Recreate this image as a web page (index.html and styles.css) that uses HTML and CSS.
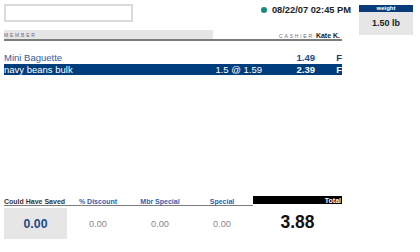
FILE: index.html
```html
<html lang="en">
<head>
    <meta charset="UTF-8">
    <title>Register</title>
    <link rel="stylesheet" href="styles.css">
</head>
<body>
    <div class="screen">
        <div class="main">
            <div class="top">
                <input type="text" class="search">
                <div class="clock"><span class="dot"></span>08/22/07 02:45 PM</div>
            </div>

            <div class="ids">
                <div class="member"><span class="tag">MEMBER</span></div>
                <div class="cashier"><span class="tag">CASHIER</span> <b>Kate K.</b></div>
            </div>

            <!-- Список товаров -->
            <div class="items">
                <div class="item">
                    <span class="name">Mini Baguette</span>
                    <span class="qty"></span>
                    <span class="price">1.49</span>
                    <span class="flag">F</span>
                </div>
                <div class="item selected">
                    <span class="name">navy beans bulk</span>
                    <span class="qty">1.5 @ 1.59</span>
                    <span class="price">2.39</span>
                    <span class="flag">F</span>
                </div>
            </div>

            <!-- Итоги -->
            <div class="totals">
                <div class="head saved">Could Have Saved</div>
                <div class="head">% Discount</div>
                <div class="head">Mbr Special</div>
                <div class="head">Special</div>
                <div class="head total-head">Total</div>

                <div class="val saved-val">0.00</div>
                <div class="val">0.00</div>
                <div class="val">0.00</div>
                <div class="val">0.00</div>
                <div class="val total-val">3.88</div>
            </div>
        </div>

        <div class="weight">
            <div class="weight-title">weight</div>
            <div class="weight-value">1.50 lb</div>
        </div>
    </div>
</body>
</html>
```

FILE: styles.css
```css
body {
    margin: 0;
    padding: 4px 0 0 4px;
    font-family: 'Liberation Sans', Arial, sans-serif;
    background: #fff;
    color: #222;
}
.screen {
    display: flex;
    align-items: flex-start;
}
.main {
    width: 338px;
}

/* Верхняя строка */
.top {
    display: flex;
    justify-content: space-between;
    align-items: center;
    height: 18px;
}
.search {
    width: 129px;
    height: 18px;
    box-sizing: border-box;
    border: 2px solid #dadada;
    margin: 0;
    padding: 0;
    outline: none;
}
.clock {
    display: flex;
    align-items: center;
    margin-right: -9px;
    margin-top: -6px;
    font-size: 9.3px;
    font-weight: bold;
    color: #222;
}
.dot {
    width: 6px;
    height: 6px;
    border-radius: 50%;
    background: #178a80;
    margin-right: 5px;
}

/* Member / cashier */
.ids {
    display: flex;
    margin-top: 8px;
    height: 9px;
    border-bottom: 2px solid #7c7c7c;
}
.member {
    width: 209px;
    background: #e6e6e6;
    line-height: 10px;
    font-size: 5px;
}
.cashier {
    flex: 1;
    text-align: right;
    padding-right: 2px;
    line-height: 11px;
    font-size: 7px;
}
.tag {
    font-size: 5px;
    letter-spacing: 1.8px;
    color: #6e6a78;
}

/* Товары */
.items {
    margin-top: 11px;
    height: 144px;
}
.item {
    display: grid;
    grid-template-columns: 1fr 60px 53px 27px;
    height: 11.5px;
    line-height: 11.5px;
    font-size: 9.5px;
    color: #2f5b9c;
}
.item .qty, .item .price, .item .flag {
    text-align: right;
}
.item .price {
    font-weight: bold;
    color: #1e4a8a;
}
.item .flag {
    font-weight: bold;
    color: #1e3a66;
}
.item.selected {
    background: #003d7c;
    color: #fff;
}
.item.selected .price, .item.selected .flag {
    color: #fff;
}

/* Итоги */
.totals {
    display: grid;
    grid-template-columns: 63px 62px 62px 62px 1fr;
}
.head {
    height: 9px;
    line-height: 11px;
    border-bottom: 1px solid #7c7c7c;
    font-size: 7px;
    font-weight: bold;
    color: #2c62b0;
    text-align: center;
}
.head.saved {
    color: #333;
    text-align: left;
}
.head.total-head {
    height: 8px;
    line-height: 9px;
    border-bottom: none;
    background: #000;
    color: #fff;
    text-align: right;
    padding-right: 1px;
}
.val {
    margin-top: 2px;
    height: 31px;
    display: flex;
    align-items: center;
    justify-content: center;
    font-size: 9.2px;
    color: #8a8a8a;
}
.val.saved-val {
    background: #e6e6e6;
    font-size: 12.3px;
    font-weight: bold;
    color: #1d4a87;
}
.val.total-val {
    font-size: 17.5px;
    font-weight: bold;
    color: #111;
    padding-bottom: 3px;
    box-sizing: border-box;
}

/* Весы */
.weight {
    width: 54px;
    margin-left: 17px;
    margin-top: 1px;
    background: #e6e6e6;
}
.weight-title {
    height: 7px;
    line-height: 7px;
    background: #0b3c7a;
    color: #fff;
    font-size: 6px;
    font-weight: bold;
    text-align: center;
}
.weight-value {
    height: 23px;
    line-height: 23px;
    font-size: 9px;
    font-weight: bold;
    text-align: center;
}
```
